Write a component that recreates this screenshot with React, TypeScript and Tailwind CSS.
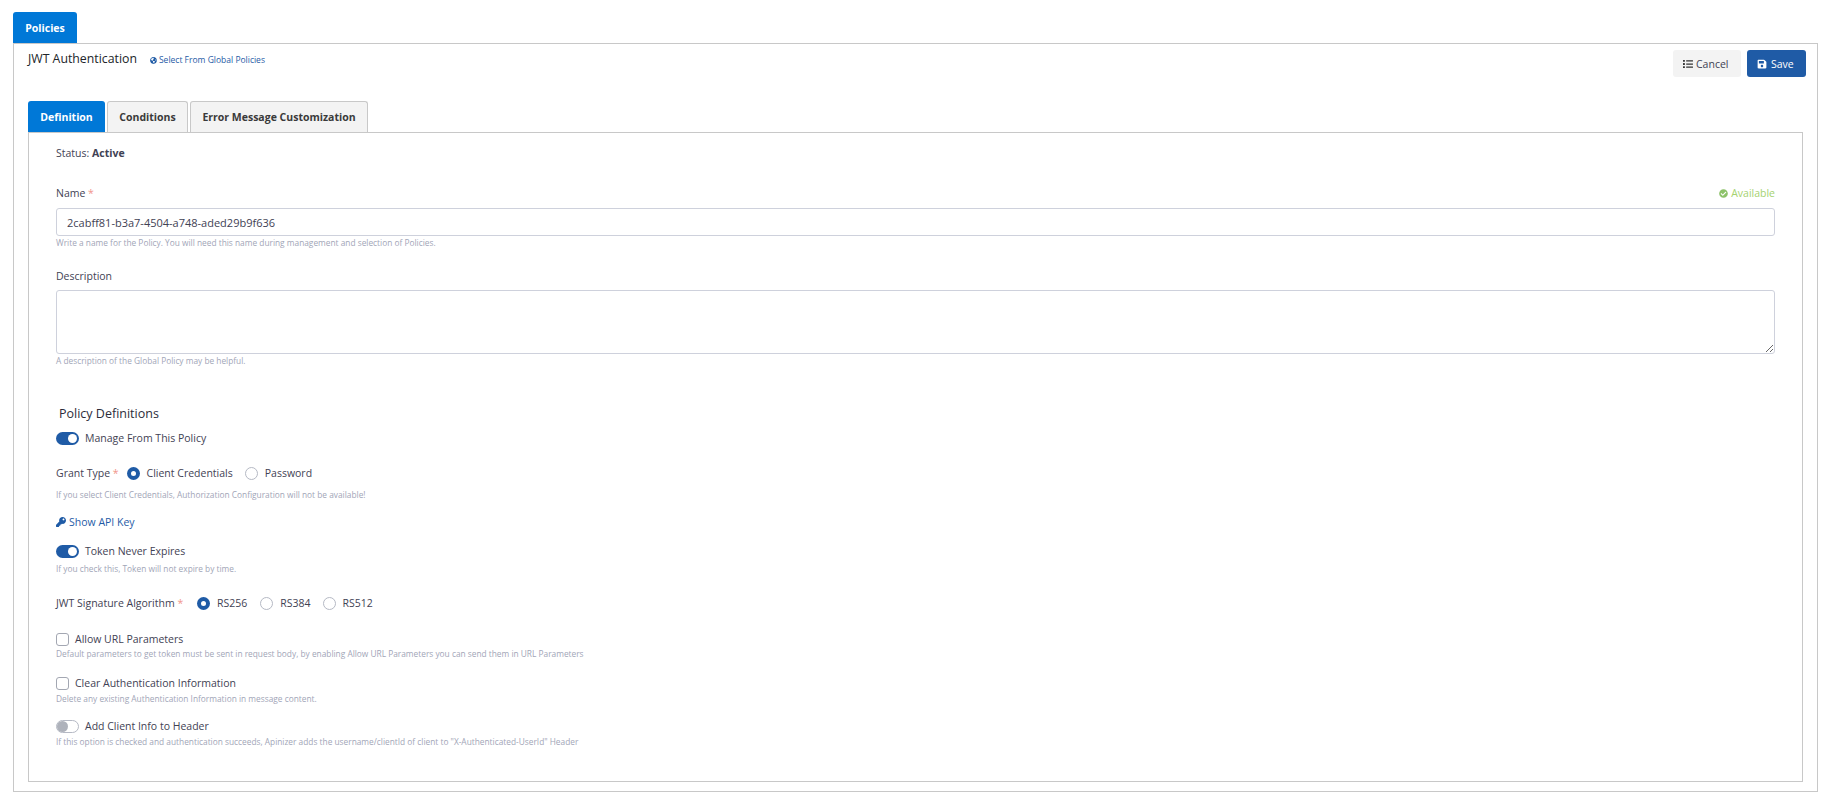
import { FaCheckCircle, FaGlobeAmericas, FaKey, FaList, FaSave } from "react-icons/fa";

function Required() {
  return <span className="text-[#f1948a]"> *</span>;
}

function Help({ children, className = "" }: { children: React.ReactNode; className?: string }) {
  return <div className={`text-[8.33px] leading-[12px] text-[#a1a5b7] ${className}`}>{children}</div>;
}

function Toggle({ on }: { on: boolean }) {
  return on ? (
    <span className="flex h-[13px] w-[23px] items-center justify-end rounded-full bg-[#1f5ba6] pr-[2px]">
      <span className="h-[9px] w-[9px] rounded-full bg-white" />
    </span>
  ) : (
    <span className="flex h-[13px] w-[23px] items-center rounded-full border border-[#b5b9c4] bg-white">
      <span className="h-[11px] w-[11px] rounded-full bg-[#aeb2bb]" />
    </span>
  );
}

function Radio({ on, label, className = "" }: { on?: boolean; label: string; className?: string }) {
  return (
    <span className={`flex items-center gap-[7px] ${className}`}>
      {on ? (
        <span className="flex h-[13px] w-[13px] items-center justify-center rounded-full bg-[#1f5ba6]">
          <span className="h-[5px] w-[5px] rounded-full bg-white" />
        </span>
      ) : (
        <span className="h-[13px] w-[13px] rounded-full border border-[#b5b9c4] bg-white" />
      )}
      {label}
    </span>
  );
}

function Checkbox({ label }: { label: string }) {
  return (
    <div className="flex h-[14px] items-center gap-[6px]">
      <span className="h-[13px] w-[13px] rounded-[3px] border border-[#a3a7b2] bg-white" />
      {label}
    </div>
  );
}

export default function App() {
  return (
    <div className="min-h-[802px] bg-white px-[13px] pt-[12px] font-['Open_Sans','Noto_Sans',sans-serif] text-[10.5px] leading-[14px] text-[#3f4254]">
      <div className="flex h-[31px] w-[64px] items-center justify-center rounded-t-[3px] bg-[#0078d7] text-[10.5px] font-bold text-white">
        Policies
      </div>

      <div className="h-[749px] w-[1805px] border border-[#c8c8c8] px-[14px]">
        <div className="flex h-[57px] items-start justify-between">
          <div className="flex items-center pt-[7px]">
            <span className="text-[12.3px] leading-[16px] font-medium text-[#212529]">JWT Authentication</span>
            <span className="ml-[13px] flex items-center gap-[2px] pt-[2px] text-[8.5px] text-[#1f5ba6]">
              <FaGlobeAmericas className="h-[7px] w-[7px]" />
              Select From Global Policies
            </span>
          </div>
          <div className="mr-[-3px] flex gap-[6px] pt-[6px]">
            <button type="button" className="flex h-[27px] w-[68px] items-center gap-[3px] rounded-[3px] bg-[#f3f3f3] pl-[10px] text-[#3f4254]">
              <FaList className="h-[10px] w-[10px] text-[#333]" />
              Cancel
            </button>
            <button type="button" className="flex h-[27px] w-[59px] items-center gap-[4px] rounded-[3px] bg-[#1f5ba6] pl-[10px] text-white">
              <FaSave className="h-[10px] w-[10px]" />
              Save
            </button>
          </div>
        </div>

        <div className="flex gap-[2px]">
          <div className="flex h-[31px] w-[77px] items-center justify-center rounded-t-[3px] bg-[#0078d7] font-bold text-white">Definition</div>
          <div className="flex h-[31px] w-[81px] items-center justify-center rounded-t-[3px] border border-b-0 border-[#c8c8c8] bg-[#f3f3f3] font-bold text-[#3a3a3a]">Conditions</div>
          <div className="flex h-[31px] w-[178px] items-center justify-center rounded-t-[3px] border border-b-0 border-[#c8c8c8] bg-[#f3f3f3] font-bold text-[#3a3a3a]">Error Message Customization</div>
        </div>

        <div className="h-[650px] w-[1775px] border border-[#c8c8c8] pl-[27px] pr-[27px] pt-[13px]">
          <div>
            Status: <span className="font-bold">Active</span>
          </div>

          <div className="mt-[26px] flex justify-between">
            <span>
              Name<Required />
            </span>
            <span className="flex items-center gap-[3px] text-[#a5d26f]">
              <FaCheckCircle className="h-[9px] w-[9px] text-[#8dc26a]" />
              Available
            </span>
          </div>
          <input
            readOnly
            value="2cabff81-b3a7-4504-a748-aded29b9f636"
            className="mt-[8px] block h-[28px] w-[1719px] rounded-[3px] border border-[#ced1dc] px-[10px] text-[11px] text-[#3f4254] outline-none"
          />
          <Help className="mt-[1px]">Write a name for the Policy. You will need this name during management and selection of Policies.</Help>

          <div className="mt-[20px]">Description</div>
          <textarea className="mt-[7px] block h-[64px] w-[1719px] rounded-[3px] border border-[#ced1dc] outline-none" />
          <Help className="mt-[1px]">A description of the Global Policy may be helpful.</Help>

          <div className="ml-[3px] mt-[39px] text-[12.5px] leading-[16px] font-medium text-[#2c2c3a]">Policy Definitions</div>

          <div className="mt-[9px] flex items-center gap-[6px]">
            <Toggle on />
            Manage From This Policy
          </div>

          <div className="mt-[21px] flex items-center">
            <span>
              Grant Type<Required />
            </span>
            <Radio on label="Client Credentials" className="ml-[8px]" />
            <Radio label="Password" className="ml-[12px]" />
          </div>
          <Help className="mt-[9px]">If you select Client Credentials, Authorization Configuration will not be available!</Help>

          <div className="mt-[14px] flex items-center gap-[3px] text-[#1f5ba6]">
            <FaKey className="h-[10px] w-[10px]" />
            Show API Key
          </div>

          <div className="mt-[15px] flex items-center gap-[6px]">
            <Toggle on />
            Token Never Expires
          </div>
          <Help className="mt-[5px]">If you check this, Token will not expire by time.</Help>

          <div className="mt-[21px] flex items-center">
            <span className="w-[141px]">
              JWT Signature Algorithm<Required />
            </span>
            <Radio on label="RS256" />
            <Radio label="RS384" className="ml-[13px]" />
            <Radio label="RS512" className="ml-[12px]" />
          </div>

          <div className="mt-[22px]">
            <Checkbox label="Allow URL Parameters" />
          </div>
          <Help className="mt-[2px]">Default parameters to get token must be sent in request body, by enabling Allow URL Parameters you can send them in URL Parameters</Help>

          <div className="mt-[16px]">
            <Checkbox label="Clear Authentication Information" />
          </div>
          <Help className="mt-[3px]">Delete any existing Authentication Information in message content.</Help>

          <div className="mt-[14px] flex items-center gap-[6px]">
            <Toggle on={false} />
            Add Client Info to Header
          </div>
          <Help className="mt-[3px]">If this option is checked and authentication succeeds, Apinizer adds the username/clientId of client to "X-Authenticated-UserId" Header</Help>
        </div>
      </div>
    </div>
  );
}
